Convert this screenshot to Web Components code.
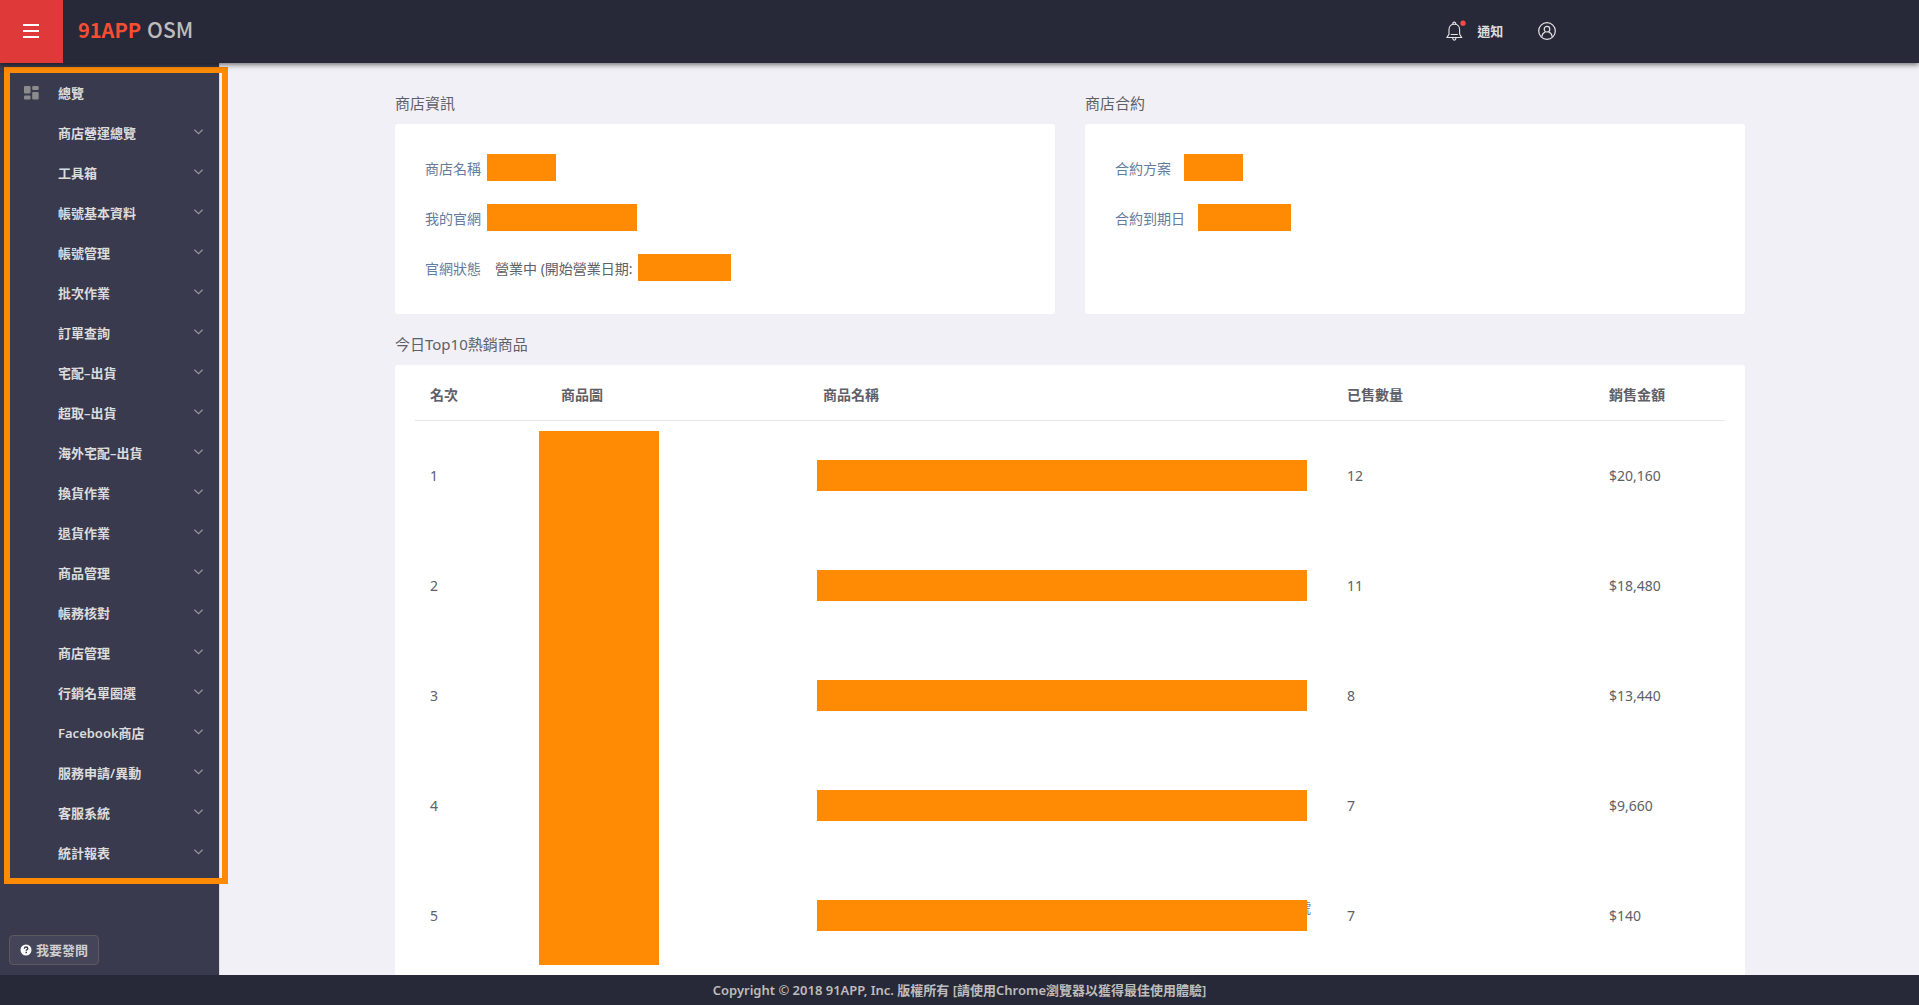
<!DOCTYPE html>
<html lang="zh-Hant">
<head>
<meta charset="utf-8">
<meta name="viewport" content="width=device-width, initial-scale=1">
<title>91APP OSM</title>
<style>
body{margin:0;font-family:"Noto Sans","Noto Sans CJK TC",sans-serif;font-size:14px;line-height:20px;color:#5e6068;background:#f1f0f6}
</style>
</head>
<body>
<osm-app></osm-app>
<script>
const define = (name, html, setup) => customElements.define(name, class extends HTMLElement {
  constructor() {
    super();
    const root = this.attachShadow({ mode: 'open' });
    const tpl = document.createElement('template');
    tpl.innerHTML = html;
    root.append(tpl.content.cloneNode(true));
  }
  connectedCallback() { if (setup) setup(this, this.shadowRoot); }
});

// Solid block that hides a private value.
define('osm-mask', `
<style>
:host{display:block;flex:none;width:var(--w,93px);height:var(--h,27px);background:#ff8a04}
</style>`, el => {
  if (el.hasAttribute('width')) el.style.setProperty('--w', el.getAttribute('width') + 'px');
});

define('osm-header', `
<style>
:host{display:flex;align-items:center;height:63px;background:#282938;box-shadow:0 2px 5px rgba(0,0,0,.5);position:relative;z-index:2;color:#dcdcdc}
button{border:0;padding:0;background:none;font:inherit;color:inherit;display:flex;align-items:center}
.menu{width:63px;height:63px;box-sizing:border-box;padding:0 2px 2px 0;background:#df3939;justify-content:center}
.logo{display:flex;align-items:baseline;gap:6px;margin-left:15px;padding-bottom:4px;text-decoration:none;font-family:"Noto Sans CJK TC",sans-serif;font-size:20px;line-height:30px;color:#bdbdbd}
.logo b{font-weight:700;color:#f74d33}
.logo span{font-size:21px;font-weight:500}
nav{display:flex;align-items:center;margin-left:auto;margin-right:18.9%;padding-bottom:2px}
.note{gap:11px;font-size:13px;font-weight:700;margin-right:35px}
svg{display:block}
</style>
<button class="menu" aria-label="選單"><svg width="16" height="14" viewBox="0 0 16 14" fill="#fff"><path d="M0 0h16v2H0zM0 6h16v2H0zM0 12h16v2H0z"/></svg></button>
<a class="logo" href="#"><b>91APP</b><span>OSM</span></a>
<nav>
<button class="note"><svg width="20" height="22" viewBox="0 0 20 22" fill="none" stroke="#e4e4e6" stroke-width="1.1"><path d="M1 17.5h14.600l-2-3.400V9.600C13.600 6 11.400 4.300 8.300 4.300S3 6 3 9.600v4.500zM6.800 4.200V3.600a1.500 1.500 0 0 1 3 0v.6M6.800 18v.6a1.500 1.500 0 0 0 3 0V18M4.800 14.500h7"/><circle cx="17" cy="3.200" r="2.600" fill="#ff4a4a" stroke="none"/></svg><span>通知</span></button>
<button aria-label="帳號"><svg width="18" height="18" viewBox="0 0 18 18" fill="none" stroke="#e4e4e6" stroke-width="1.200"><circle cx="9" cy="9" r="8.300"/><circle cx="9" cy="7.200" r="2.800"/><path d="M3.800 14.800c.3-2.600 1.700-4.200 3.700-5M14.200 14.800c-.3-2.600-1.700-4.200-3.700-5"/></svg></button>
</nav>`);

define('osm-nav-item', `
<style>
:host{display:block}
a{display:flex;align-items:center;height:40px;padding:0 16px 0 24px;text-decoration:none;color:#dcdcdc;font-size:13px;font-weight:600}
.icon{width:34px;flex:none}
.label{flex:1;white-space:nowrap}
svg{display:block}
.arrow{margin-bottom:3px}
:host([home]) .arrow,:host(:not([home])) .icon svg{display:none}
</style>
<a href="#"><span class="icon"><svg width="15" height="14" viewBox="0 0 15 14" fill="#8b8b8d"><rect width="6.500" height="7.500" rx="1"/><rect y="9.500" width="6.500" height="4" rx="1"/><rect x="8.200" width="6.500" height="4" rx="1"/><rect x="8.200" y="6" width="6.500" height="7.500" rx="1"/></svg></span><span class="label"><slot></slot></span><svg class="arrow" width="9" height="6" viewBox="0 0 9 6" fill="none" stroke="#96969c" stroke-width="1.200"><path d="M.4.700l4.100 4 4.100-4"/></svg></a>`);

define('osm-sidebar', `
<style>
:host{display:flex;flex-direction:column;justify-content:space-between;width:219px;flex:none;background:#393a4e;border-right:1px solid #dddce3;position:relative;z-index:1}
nav{padding-top:10px}
/* highlight frame drawn over the menu and the page behind it */
.frame{position:absolute;box-sizing:border-box;top:4px;left:4px;width:224px;height:817px;border:6px solid #ff8a04;pointer-events:none}
button{align-self:flex-start;display:flex;align-items:center;gap:4px;height:30px;margin:0 9px 10px;padding:0 10px;border:1px solid #5b5a5c;border-radius:4px;background:#444559;color:#cfcfcf;font:600 13px/20px "Noto Sans","Noto Sans CJK TC",sans-serif}
svg{display:block}
</style>
<nav></nav>
<button><svg width="12" height="12" viewBox="0 0 12 12"><circle cx="6" cy="6" r="5.500" fill="#fff"/><path d="M4.300 4.700c.1-1.200.9-1.700 1.800-1.700s1.700.6 1.700 1.500c0 1.100-1.600 1.200-1.600 2.300" fill="none" stroke="#393a4e" stroke-width="1.400"/><rect x="5.400" y="7.700" width="1.500" height="1.500" fill="#393a4e"/></svg><span>我要發問</span></button>
<div class="frame"></div>`, (el, root) => {
  const items = ['總覽','商店營運總覽','工具箱','帳號基本資料','帳號管理','批次作業','訂單查詢','宅配–出貨','超取–出貨','海外宅配–出貨','換貨作業','退貨作業','商品管理','帳務核對','商店管理','行銷名單圈選','Facebook商店','服務申請/異動','客服系統','統計報表'];
  root.querySelector('nav').append(...items.map((t, i) => {
    const item = document.createElement('osm-nav-item');
    item.textContent = t;
    if (!i) item.setAttribute('home', '');
    return item;
  }));
});

define('osm-panel', `
<style>
:host{display:flex;flex-direction:column;flex:1}
h2{margin:0 0 11px;font-size:15px;font-weight:400;line-height:20px}
.card{flex:1;background:#fff;border-radius:3px;padding:20px 30px}
:host([wide]) .card{padding:5px 20px 20px}
</style>
<h2></h2><div class="card"><slot></slot></div>`, (el, root) => { root.querySelector('h2').textContent = el.getAttribute('heading'); });

define('osm-field', `
<style>
:host{display:flex;align-items:center;height:50px}
.label{color:#647d9c;margin-right:var(--gap,6px)}
::slotted(span){margin-right:5px}
::slotted(osm-mask){margin-bottom:4px}
</style>
<span class="label"></span><slot></slot>`, (el, root) => { root.querySelector('.label').textContent = el.getAttribute('label'); });

define('osm-top10', `
<style>
:host{display:block;position:relative}
table{width:100%;table-layout:fixed;border-collapse:separate;border-spacing:0}
th,td{padding:0 15px;text-align:left}
th{height:50px;border-bottom:1px solid #e6e6ea;font-weight:700}
td{height:110px}
td.name{padding:0 9px;position:relative}
/* one block over the whole picture column */
.pictures{position:absolute;top:61px;left:124px;--w:120px;--h:534px}
.name osm-mask{--w:490px;--h:31px;margin-bottom:2px;position:relative}
/* product name running on behind its block */
.name a{position:absolute;top:37px;right:21px;color:#647d9c;text-decoration:none}
</style>
<table>
<colgroup><col style="width:10%"><col style="width:20%"><col style="width:40%"><col style="width:20%"><col style="width:10%"></colgroup>
<thead><tr><th>名次</th><th>商品圖</th><th>商品名稱</th><th>已售數量</th><th>銷售金額</th></tr></thead>
<tbody></tbody>
</table>
<osm-mask class="pictures"></osm-mask>`, (el, root) => {
  root.querySelector('tbody').innerHTML = [[12,'$20,160'],[11,'$18,480'],[8,'$13,440'],[7,'$9,660'],[7,'$140','號']]
    .map(([n, v, name], i) => `<tr><td>${i + 1}</td><td></td><td class="name">${name ? `<a href="#">${name}</a>` : ''}<osm-mask></osm-mask></td><td>${n}</td><td>${v}</td></tr>`).join('');
});

define('osm-footer', `
<style>
:host{display:block;background:#282938;color:#bdbdbd;font-size:13px;font-weight:600;line-height:30px;text-align:center;position:relative;z-index:2}
</style><slot></slot>`);

define('osm-app', `
<style>
:host{display:flex;flex-direction:column;height:100vh}
.body{display:flex;flex:1;min-height:0}
main{flex:1;min-width:0;overflow:hidden;padding:30px 24px 0 25px}
.inner{max-width:1350px;margin:0 auto;display:flex;flex-direction:column;gap:20px}
.row{display:flex;gap:30px}
</style>
<osm-header></osm-header>
<div class="body">
<osm-sidebar></osm-sidebar>
<main><div class="inner">
<div class="row">
<osm-panel heading="商店資訊">
<osm-field label="商店名稱"><osm-mask width="69"></osm-mask></osm-field>
<osm-field label="我的官網"><osm-mask width="150"></osm-mask></osm-field>
<osm-field label="官網狀態" style="--gap:14px"><span>營業中 (開始營業日期:</span><osm-mask></osm-mask></osm-field>
</osm-panel>
<osm-panel heading="商店合約" style="--gap:13px">
<osm-field label="合約方案"><osm-mask width="59"></osm-mask></osm-field>
<osm-field label="合約到期日"><osm-mask></osm-mask></osm-field>
</osm-panel>
</div>
<osm-panel wide heading="今日Top10熱銷商品"><osm-top10></osm-top10></osm-panel>
</div></main>
</div>
<osm-footer>Copyright © 2018 91APP, Inc. 版權所有 [請使用Chrome瀏覽器以獲得最佳使用體驗]</osm-footer>`);
</script>
</body>
</html>
